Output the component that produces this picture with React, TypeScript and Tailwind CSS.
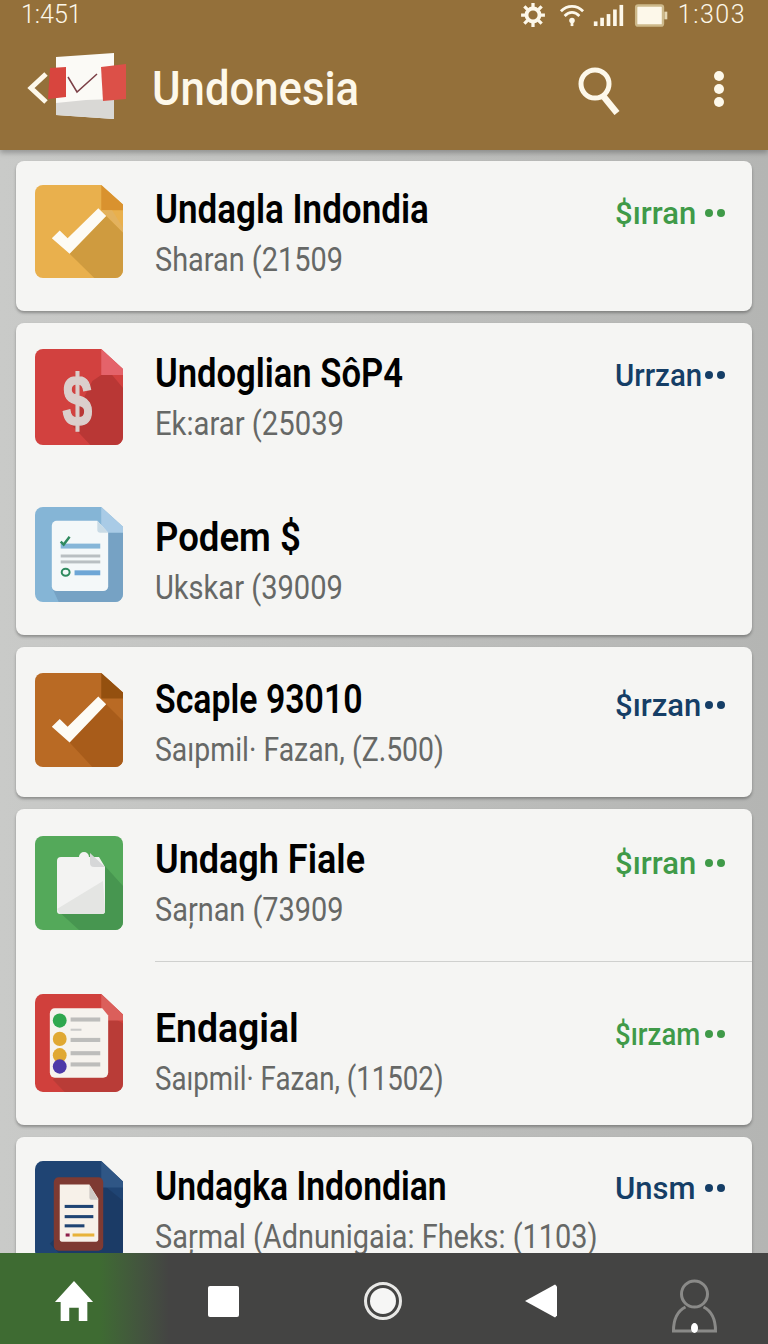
import type {ReactNode} from "react";

type Item = {
    icon: ReactNode;
    title: string;
    sub: string;
    tag?: string;
    green?: boolean;
    rowClass: string; // row height
    iconClass: string; // icon top offset
    textClass: string; // text top offset
    titleClass: string; // title squeeze
    subClass: string; // subtitle squeeze
    tagClass?: string; // tag top offset
    tagTextClass?: string; // tag squeeze
};

// Base tile with the folded corner and the long shadow
function Tile({h, base, fold, dark, shadow, children}: {h: number; base: string; fold: string; dark: string; shadow: string; children?: ReactNode}) {
    return (
        <svg width="88" height={h} viewBox="0 1 89 96" preserveAspectRatio="none" className="shrink-0">
            <path d="M8 1H67L89 21V89a8 8 0 0 1-8 8H8a8 8 0 0 1-8-8V9a8 8 0 0 1 8-8Z" fill={base}/>
            <path d={shadow} fill={dark}/>
            <path d="M67 1L89 21L89 27L67 27Z" fill={fold}/>
            {children}
        </svg>
    );
}

const checkMark = <path d="M17 56L25 48L33 56L64 25L72 33L35 72Z" fill="#fdfbf5"/>;

const icons = {
    yellow: (
        <Tile h={93} base="#e9b04d" fold="#d9922f" dark="#cf9b3f" shadow="M35 72L72 33L89 50V89a8 8 0 0 1-8 8H60Z">
            <path d="M67 27H78L89 45V50Z" fill="#e3b25e"/>
            {checkMark}
        </Tile>
    ),
    red: (
        <Tile h={96} base="#d2413f" fold="#e4636a" dark="#b93735" shadow="M58 33L67 27H78L89 40V89a8 8 0 0 1-8 8H56L36 76Z">
            <text x="57" y="78" textAnchor="middle" transform="scale(0.75 1)" fontFamily="'Liberation Sans', sans-serif" fontWeight="700" fontSize="72" fill="#dbcfcc" stroke="#dbcfcc" strokeWidth="1.5">$</text>
        </Tile>
    ),
    blue: (
        <Tile h={95} base="#85b5d6" fold="#a9cbe6" dark="#76a2c4" shadow="M74 24L89 24V89a8 8 0 0 1-8 8H24L18 84Z">
            <path d="M22 15H63L74 27V81a5 5 0 0 1-5 5H22a5 5 0 0 1-5-5V20a5 5 0 0 1 5-5Z" fill="#f4f8f9"/>
            <path d="M63 15V24a3 3 0 0 0 3 3H74Z" fill="#c9dbe6"/>
            <rect x="26" y="38" width="40" height="5" fill="#86b6d8"/>
            <rect x="26" y="49" width="40" height="3" fill="#b9bfc2"/>
            <rect x="26" y="55" width="40" height="3" fill="#b9bfc2"/>
            <rect x="40" y="65" width="26" height="5" fill="#6ea6d6"/>
            <path d="M26 36L29 39L35 31" fill="none" stroke="#2f8a5f" strokeWidth="2.5"/>
            <ellipse cx="31" cy="67" rx="4" ry="3.5" fill="none" stroke="#2f8a5f" strokeWidth="2"/>
        </Tile>
    ),
    brown: (
        <Tile h={94} base="#b96a24" fold="#94500f" dark="#a85c1a" shadow="M35 72L72 33L89 50V89a8 8 0 0 1-8 8H58Z">
            {checkMark}
        </Tile>
    ),
    green: (
        <svg width="88" height="94" viewBox="0 0 88 94" className="shrink-0">
            <rect width="88" height="94" rx="8" fill="#54a95a"/>
            <path d="M70 30L88 50V86a8 8 0 0 1-8 8H44L22 74Z" fill="#479650"/>
            <path d="M26 21H44a5 5 0 0 1 10 0H64L70 31V75a3 3 0 0 1-3 3H25a3 3 0 0 1-3-3V25a4 4 0 0 1 4-4Z" fill="#f3f3f2"/>
            <path d="M22 73L68 45L70 75a3 3 0 0 1-3 3H25Z" fill="#e4e5e3"/>
            <path d="M55 17L70 31H59a4 4 0 0 1-4-4Z" fill="#d6d7d8"/>
        </svg>
    ),
    list: (
        <Tile h={98} base="#d0403c" fold="#db5f5b" dark="#b93c37" shadow="M74 21L89 30V89a8 8 0 0 1-8 8H30L18 85Z">
            <path d="M20 15H68L74 22V78a5 5 0 0 1-5 5H20a5 5 0 0 1-5-5V20a5 5 0 0 1 5-5Z" fill="#f6f3ee"/>
            <circle cx="25" cy="27" r="7" fill="#2fa84f"/>
            <circle cx="25" cy="45" r="7" fill="#e0a832"/>
            <circle cx="25" cy="61" r="7" fill="#e0a832"/>
            <circle cx="25" cy="72" r="7" fill="#4d3aa8"/>
            <rect x="36" y="24" width="30" height="4" fill="#bdbdbb"/>
            <rect x="36" y="35" width="11" height="2" fill="#c9c9c7"/>
            <rect x="36" y="44" width="30" height="4" fill="#bdbdbb"/>
            <rect x="36" y="57" width="30" height="4" fill="#bdbdbb"/>
            <rect x="36" y="68" width="30" height="4" fill="#bdbdbb"/>
        </Tile>
    ),
    navy: (
        <Tile h={98} base="#1f4473" fold="#2f5685" dark="#1b3b66" shadow="M70 25L89 40V89a8 8 0 0 1-8 8H30L15 82Z">
            <rect x="19" y="17" width="50" height="72" rx="5" fill="#7e3a32"/>
            <path d="M25 24H55L64 38V78a2 2 0 0 1-2 2H27a2 2 0 0 1-2-2Z" fill="#f7f1e9"/>
            <path d="M55 24V37a2 2 0 0 0 2 2H64Z" fill="#cfc9c4"/>
            <rect x="30" y="44" width="29" height="3" fill="#1f4473"/>
            <rect x="30" y="54" width="29" height="3" fill="#1f4473"/>
            <rect x="30" y="63" width="20" height="3" fill="#1f4473"/>
            <rect x="31" y="72" width="4" height="3" fill="#8e1f4a"/>
            <rect x="38" y="72" width="22" height="3" fill="#e8b23a"/>
        </Tile>
    ),
};

const cards: Item[][] = [
    [{icon: icons.yellow, title: "Undagla Indondia", sub: "Sharan (21509", tag: "$ırran", green: true, rowClass: "h-[150px]", iconClass: "mt-[24px]", textClass: "mt-[26px]", titleClass: "scale-x-[0.875]", subClass: "scale-x-[0.85]", tagClass: "mt-[32px]", tagTextClass: "scale-x-[0.97]"}],
    [
        {icon: icons.red, title: "Undoglian SôP4", sub: "Ek:arar (25039", tag: "Urrzan", rowClass: "h-[158px]", iconClass: "mt-[26px]", textClass: "mt-[28px]", titleClass: "scale-x-[0.865]", subClass: "scale-x-[0.86]", tagClass: "mt-[32px]", tagTextClass: "scale-x-[0.92]"},
        {icon: icons.blue, title: "Podem $", sub: "Ukskar (39009", rowClass: "h-[154px]", iconClass: "mt-[26px]", textClass: "mt-[34px]", titleClass: "scale-x-[0.913]", subClass: "scale-x-[0.855]"},
    ],
    [{icon: icons.brown, title: "Scaple 93010", sub: "Saıpmil· Fazan, (Z.500)", tag: "$ırzan", rowClass: "h-[150px]", iconClass: "mt-[26px]", textClass: "mt-[30px]", titleClass: "scale-x-[0.846]", subClass: "scale-x-[0.835]", tagClass: "mt-[38px]", tagTextClass: "scale-x-[0.97]"}],
    [
        {icon: icons.green, title: "Undagh Fiale", sub: "Saŗnan (73909", tag: "$ırran", green: true, rowClass: "h-[158px]", iconClass: "mt-[27px]", textClass: "mt-[28px]", titleClass: "scale-x-[0.9]", subClass: "scale-x-[0.85]", tagClass: "mt-[34px]", tagTextClass: "scale-x-[0.97]"},
        {icon: icons.list, title: "Endagial", sub: "Saıpmil· Fazan, (11502)", tag: "$ırzam", green: true, rowClass: "h-[158px]", iconClass: "mt-[27px]", textClass: "mt-[39px]", titleClass: "scale-x-[0.934]", subClass: "scale-x-[0.813]", tagClass: "mt-[47px]", tagTextClass: "scale-x-[0.86]"},
    ],
    [{icon: icons.navy, title: "Undagka Indondian", sub: "Saŗmal (Adnunigaia: Fheks: (1103)", tag: "Unsm", rowClass: "h-[149px]", iconClass: "mt-[24px]", textClass: "mt-[27px]", titleClass: "scale-x-[0.843]", subClass: "scale-x-[0.85]", tagClass: "mt-[31px]", tagTextClass: "scale-x-[0.97]"}],
];

function Row({item, divider}: {item: Item; divider?: boolean}) {
    const tagText = item.green ? "text-[#3f9a48]" : "text-[#153e66]";
    const dot = item.green ? "bg-[#3f9a48]" : "bg-[#153e66]";
    return (
        <div className={`relative flex pl-[19px] pr-[27px] ${item.rowClass}`}>
            {divider && <div className="absolute left-[139px] right-0 top-[-6px] h-px bg-[#cfd0ce]"/>}
            <div className={`w-[88px] shrink-0 ${item.iconClass}`}>{item.icon}</div>
            <div className={`ml-[32px] min-w-0 flex-1 ${item.textClass}`}>
                <div className={`origin-left text-[40px] leading-[46px] font-semibold whitespace-nowrap text-black ${item.titleClass}`}>{item.title}</div>
                <div className={`mt-[6px] origin-left text-[34px] leading-[40px] whitespace-nowrap text-[#666866] ${item.subClass}`}>{item.sub}</div>
            </div>
            {item.tag && (
                <div className={`flex h-[40px] w-[110px] shrink-0 items-center ${item.tagClass} ${tagText}`}>
                    <span className={`min-w-0 flex-1 origin-left text-[32px] leading-[40px] font-medium whitespace-nowrap ${item.tagTextClass}`}>{item.tag}</span>
                    <span className="flex gap-[4px]">
                        <span className={`size-[8px] rounded-full ${dot}`}/>
                        <span className={`size-[8px] rounded-full ${dot}`}/>
                    </span>
                </div>
            )}
        </div>
    );
}

function App() {
    return (
        <div className="flex h-[1344px] w-[768px] flex-col overflow-hidden bg-[#c3c4c2] font-['Roboto',sans-serif]">
            {/* Status bar + app bar */}
            <header className="z-10 h-[150px] shrink-0 bg-[#94703a] text-[#fdf8ea] shadow-[0_3px_5px_rgba(0,0,0,0.25)]">
                <div className="flex h-[30px] items-center justify-between pl-[21px] pr-[22px] text-[25px] leading-[30px] font-light">
                    <span>1:451</span>
                    <div className="flex items-center">
                        <svg width="28" height="26" viewBox="0 0 24 24" fill="none" stroke="#fdf8ea">
                            <circle cx="12" cy="12" r="6" strokeWidth="3.5"/>
                            <path d="M12 1V5M12 19V23M1 12H5M19 12H23M4 4L7 7M17 17L20 20M4 20L7 17M17 7L20 4" strokeWidth="3"/>
                        </svg>
                        <svg width="26" height="24" viewBox="0 0 28 26" fill="none" stroke="#fdf8ea" strokeWidth="3" className="ml-[12px]">
                            <path d="M2 9C9 2 19 2 26 9M6 14C11 9 17 9 22 14"/>
                            <circle cx="14" cy="19" r="3" fill="#fdf8ea" stroke="none"/>
                            <path d="M14 20V25"/>
                        </svg>
                        <svg width="33" height="22" viewBox="0 0 34 24" fill="#fdf8ea" className="ml-[7px]">
                            <rect x="1" y="19" width="4" height="5"/>
                            <rect x="8" y="15" width="4" height="9"/>
                            <rect x="15" y="11" width="4" height="13"/>
                            <rect x="22" y="6" width="4" height="18"/>
                            <rect x="29" y="1" width="4" height="23"/>
                        </svg>
                        <svg width="34" height="23" viewBox="0 0 34 24" className="ml-[9px]">
                            <rect x="1.5" y="1.5" width="28" height="21" rx="2" fill="#fdf8ea" stroke="#cdb98b" strokeWidth="2.5"/>
                            <rect x="31" y="8" width="3" height="8" fill="#e6d8b4"/>
                        </svg>
                        <span className="ml-[10px] tracking-[1.5px] whitespace-nowrap">1:303</span>
                    </div>
                </div>
                <div className="flex items-center pl-[26px] pr-[44px] pt-[23px]">
                    <svg width="100" height="67" viewBox="0 0 100 67" className="shrink-0">
                        <path d="M20 21L5 35L20 49" fill="none" stroke="#fdf8ea" strokeWidth="5"/>
                        <path d="M30 4L88 0V66L30 62Z" fill="#fbfaf6"/>
                        <path d="M30 62V50L60 47L88 46V66Z" fill="#d9d8d5"/>
                        <path d="M24 15L40 14V44L22 46Z" fill="#d8453e"/>
                        <path d="M75 14L100 11V46L77 48Z" fill="#dc5048"/>
                        <path d="M42 24L51 39L71 21" fill="none" stroke="#7b3f46" strokeWidth="1.5"/>
                    </svg>
                    <h1 className="ml-[26px] mt-[4px] flex-1 origin-left scale-x-[0.91] text-[48px] leading-[56px] font-medium whitespace-nowrap">Undonesia</h1>
                    <svg width="44" height="48" viewBox="0 0 44 48" fill="none" stroke="#fdf8ea" className="mt-[8px]">
                        <circle cx="18" cy="17" r="14" strokeWidth="5"/>
                        <path d="M27 30L40 46" strokeWidth="6.5"/>
                    </svg>
                    <div className="ml-[93px] mt-[4px] flex flex-col gap-[3px]">
                        <span className="size-[10px] rounded-full bg-[#fdf8ea]"/>
                        <span className="size-[10px] rounded-full bg-[#fdf8ea]"/>
                        <span className="size-[10px] rounded-full bg-[#fdf8ea]"/>
                    </div>
                </div>
            </header>

            {/* List of cards */}
            <main className="min-h-0 flex-1 overflow-hidden bg-gradient-to-r from-[#c9cac8] to-[#b4b5b3] px-[16px] pt-[11px]">
                <div className="flex flex-col gap-[12px]">
                    {cards.map((rows, i) => (
                        <section key={i} className="rounded-[8px] bg-[#f5f5f3] shadow-[0_2px_3px_rgba(0,0,0,0.3)]">
                            {rows.map((item, j) => (
                                <Row key={j} item={item} divider={i === 3 && j === 1}/>
                            ))}
                        </section>
                    ))}
                </div>
            </main>

            {/* Bottom navigation */}
            <nav className="flex h-[91px] shrink-0 items-center bg-[#444443] bg-gradient-to-r from-[#3e6b32] via-[#3e6b32] via-13% to-[#444443] to-[22%] pl-[54px]">
                <svg width="40" height="40" viewBox="0 0 40 42" fill="#fff" className="mt-[5px]">
                    <path d="M20 0L40 22H34V42H25V28H15V42H6V22H0Z"/>
                </svg>
                <div className="ml-[114px] mt-[5px] size-[31px] rounded-[2px] bg-white"/>
                <div className="ml-[125px] mt-[5px] size-[38px] rounded-full border-[3px] border-[#e8e8e6] p-[3px]">
                    <div className="size-full rounded-full bg-[#f6f6f5]"/>
                </div>
                <svg width="32" height="34" viewBox="0 0 33 34" fill="#fff" className="ml-[123px] mt-[5px]">
                    <path d="M31 0L33 2V32L31 34L0 17Z"/>
                </svg>
                <svg width="47" height="56" viewBox="0 0 46 56" fill="none" stroke="#8a8a88" strokeWidth="3" className="ml-[114px] mt-[16px]">
                    <circle cx="23" cy="15" r="13"/>
                    <path d="M14 28C6 32 2 40 2 52H44C44 40 40 32 32 28"/>
                    <ellipse cx="23" cy="49" rx="3.5" ry="5" fill="#fff" stroke="none"/>
                </svg>
            </nav>
        </div>
    );
}

export default App;
